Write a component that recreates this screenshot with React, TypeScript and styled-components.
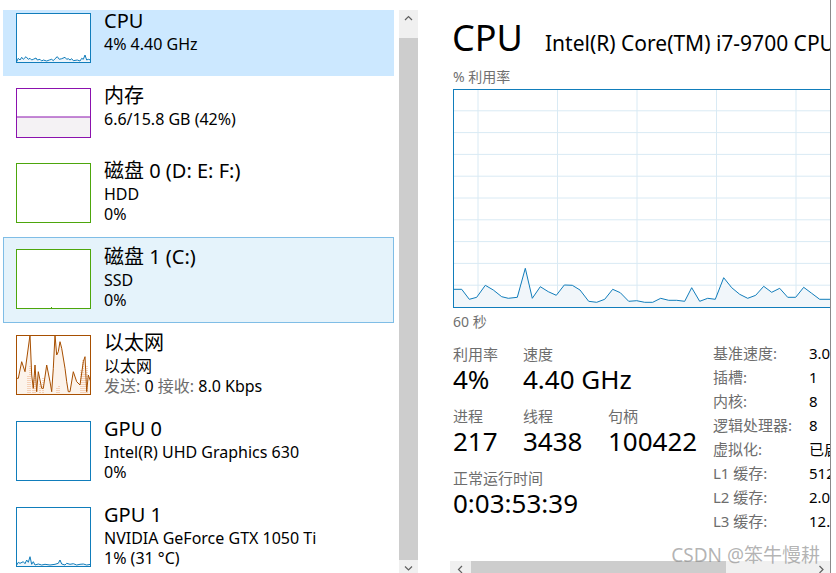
import React from 'react';
import styled, { createGlobalStyle } from 'styled-components';

const FONT = `"Noto Sans", "Noto Sans CJK SC", sans-serif`;

const GlobalStyle = createGlobalStyle`
  html, body { margin: 0; padding: 0; background: #fff; }
  body { font-family: ${FONT}; overflow: hidden; color: #000; }
  * { box-sizing: border-box; }
`;

const Window = styled.div`
  display: flex;
  width: 836px;
  height: 573px;
  overflow: hidden;
  background: #fff;
`;

/* ---------- Sidebar ---------- */
const Sidebar = styled.div`
  flex: none;
  width: 420px;
  height: 573px;
  display: flex;
  overflow: hidden;
`;

const List = styled.div`
  flex: none;
  width: 394px;
  height: 573px;
  padding: 10px 0 0 3px;
  display: flex;
  flex-direction: column;
  overflow: hidden;
`;

type RowState = 'selected' | 'hover' | undefined;

const Row = styled.div<{ $h: number; $pt: number; $state?: RowState }>`
  flex: none;
  display: flex;
  align-items: flex-start;
  height: ${(p) => p.$h}px;
  padding: ${(p) => p.$pt}px 0 0 13px;
  background: ${(p) =>
    p.$state === 'selected' ? '#cce8ff' : p.$state === 'hover' ? '#e5f3fb' : 'transparent'};
  outline: ${(p) => (p.$state === 'hover' ? '1px solid #7fbde6' : 'none')};
  outline-offset: -1px;
`;

const Thumb = styled.div<{ $color: string; $h: number }>`
  flex: none;
  width: 75px;
  height: ${(p) => p.$h}px;
  border: 1px solid ${(p) => p.$color};
  background: #fff;
  overflow: hidden;
  svg { display: block; width: 100%; height: 100%; }
`;

const TextCol = styled.div`
  margin: -5px 0 0 13px;
  display: flex;
  flex-direction: column;
  white-space: nowrap;
`;

const Title = styled.div`
  font-size: 20px;
  line-height: 26px;
`;

const Subs = styled.div`
  margin-top: 0;
`;

const Sub = styled.div`
  font-size: 16px;
  line-height: 20px;
`;

const Dim = styled.span`
  color: #6d6d6d;
`;

const VScroll = styled.div`
  flex: none;
  margin: 10px 0 0 5px;
  width: 19px;
  height: 567px;
  background: #f0f0f0;
  display: flex;
  flex-direction: column;
`;

const ArrowBtn = styled.div<{ $w?: number; $h?: number }>`
  flex: none;
  width: ${(p) => (p.$w ? `${p.$w}px` : 'auto')};
  height: ${(p) => (p.$h ? `${p.$h}px` : 'auto')};
  display: flex;
  align-items: center;
  justify-content: center;
  color: #606060;
`;

const TrackGap = styled.div<{ $size: number }>`
  flex: none;
  height: ${(p) => p.$size}px;
`;

const VThumb = styled.div`
  flex: 1;
  background: #cdcdcd;
`;

/* ---------- Main ---------- */
const Main = styled.div`
  position: relative;
  flex: none;
  width: 411px;
  height: 573px;
  border-right: 1px solid #8a8a8a;
  overflow: hidden;
  display: flex;
  flex-direction: column;
`;

const Content = styled.div`
  flex: none;
  padding: 20px 0 0 33px;
  display: flex;
  flex-direction: column;
  white-space: nowrap;
`;

const Header = styled.div`
  display: flex;
  align-items: baseline;
  height: 36px;
`;

const BigTitle = styled.div`
  flex: none;
  width: 92px;
  font-size: 36px;
  line-height: 36px;
  margin-left: -1px;
`;

const Model = styled.div`
  font-size: 21px;
  line-height: 26px;
  margin-left: 1px;
`;

const Caption = styled.div<{ $mt: number }>`
  margin-top: ${(p) => p.$mt}px;
  font-size: 14px;
  line-height: 16px;
  color: #707070;
`;

const Chart = styled.div`
  flex: none;
  margin-top: 4px;
  width: 400px;
  height: 219px;
  border: 1px solid #117dbb;
  background: #fff;
  svg { display: block; }
`;

const Stats = styled.div`
  margin-top: 11px;
  display: flex;
  align-items: flex-start;
`;

const LeftStats = styled.div`
  flex: none;
  width: 260px;
  padding-top: 3px;
  display: grid;
  grid-template-columns: 70px 85px auto;
  row-gap: 12px;
`;

const StatCell = styled.div<{ $span?: boolean }>`
  display: flex;
  flex-direction: column;
  grid-column: ${(p) => (p.$span ? '1 / -1' : 'auto')};
`;

const StatLabel = styled.div`
  font-size: 15px;
  line-height: 20px;
  color: #6d6d6d;
`;

const StatValue = styled.div`
  font-size: 26px;
  line-height: 30px;
`;

const RightStats = styled.div`
  flex: none;
  display: grid;
  grid-template-columns: 96px auto;
  font-size: 15px;
  line-height: 24px;
`;

const InfoLabel = styled.div`
  color: #6d6d6d;
`;

const InfoValue = styled.div`
  color: #000;
`;

const Spacer = styled.div`
  flex: 1;
`;

const HScroll = styled.div`
  flex: none;
  height: 17px;
  margin: 0 0 -5px 30px;
  background: #f0f0f0;
  display: flex;
`;

const HThumb = styled.div`
  flex: none;
  width: 255px;
  background: #cdcdcd;
`;

const HTrack = styled.div`
  flex: 1;
`;

const Watermark = styled.div`
  position: absolute;
  right: 10px;
  bottom: 7px;
  font-size: 19px;
  line-height: 22px;
  color: rgba(130, 130, 130, 0.6);
  white-space: nowrap;
`;

/* ---------- Icons ---------- */
const Chevron = ({ dir }: { dir: 'up' | 'down' | 'left' | 'right' }) => {
  const pts: Record<string, string> = {
    up: '1,5 4.5,1.5 8,5',
    down: '1,1.5 4.5,5 8,1.5',
    left: '5,1 1.5,4.5 5,8',
    right: '1.5,1 5,4.5 1.5,8',
  };
  const vert = dir === 'up' || dir === 'down';
  return (
    <svg width={vert ? 9 : 7} height={vert ? 7 : 9} viewBox={vert ? '0 0 9 7' : '0 0 7 9'}>
      <polyline points={pts[dir]} fill="none" stroke="currentColor" strokeWidth="1.2" />
    </svg>
  );
};

type P = [number, number];
const toStr = (p: P[]) => p.map(([x, y]) => `${x.toFixed(1)},${y.toFixed(1)}`).join(' ');
const area = (p: P[], bottom: number) =>
  `M${p[0][0].toFixed(1)},${bottom} L${toStr(p).replace(/ /g, ' L')} L${p[p.length - 1][0].toFixed(1)},${bottom} Z`;

const cpuThumbPts: P[] = (
  [
    [50, 185], [55, 175], [60, 180], [65, 172], [70, 178], [78, 170], [85, 178], [90, 175],
    [95, 180], [100, 178], [108, 174], [112, 180], [120, 178], [125, 183], [130, 180], [140, 183],
    [148, 180], [155, 178], [160, 182], [165, 176], [172, 170], [178, 178], [185, 176], [195, 172],
    [200, 178], [205, 176], [210, 180], [215, 176], [220, 182], [232, 180], [240, 183], [245, 175],
    [250, 178], [255, 165], [260, 180], [265, 178], [272, 180],
  ] as P[]
).map(([x, y]) => [x / 3 - 17, y / 3 - 14] as P);

const gpuThumbPts: P[] = (
  [
    [50, 360], [55, 352], [60, 355], [70, 350], [75, 356], [80, 345], [85, 352], [90, 335],
    [95, 358], [100, 350], [105, 360], [115, 357], [125, 360], [135, 358], [150, 360], [165, 358],
    [175, 355], [180, 345], [185, 357], [195, 360], [200, 355], [210, 358], [220, 356], [230, 360],
    [240, 358], [250, 357], [260, 360], [272, 358],
  ] as P[]
).map(([x, y]) => [x / 3 - 17, y / 3 - 63] as P);

const ethPts: P[] = (
  [
    [50, 160], [55, 160], [65, 110], [75, 140], [90, 30], [95, 150], [100, 190], [105, 120],
    [110, 200], [115, 140], [125, 190], [130, 190], [140, 120], [150, 170], [155, 200], [160, 130],
    [165, 30], [170, 90], [175, 80], [180, 50], [185, 70], [195, 130], [200, 170], [205, 200],
    [210, 200], [220, 140], [230, 170], [240, 180], [250, 110], [255, 95], [260, 200], [265, 150],
    [272, 170],
  ] as P[]
).map(([x, y]) => [x / 3 - 17, y / 3 - 11] as P);

const ethRecv: [number, number][] = [
  [11, 40], [13, 30], [16, 44], [18, 36], [23, 48], [26, 42], [40, 52], [42, 50],
  [64, 34], [66, 24], [68, 38], [70, 30],
];

const CpuThumbArt = () => (
  <svg viewBox="0 0 73 48" preserveAspectRatio="none">
    <path d={area(cpuThumbPts, 48)} fill="#eef5fb" />
    <polyline points={toStr(cpuThumbPts)} fill="none" stroke="#117dbb" strokeWidth="1" />
  </svg>
);

const MemThumbArt = () => (
  <svg viewBox="0 0 73 48" preserveAspectRatio="none">
    <rect x="0" y="28" width="73" height="20" fill="#f4f2f4" />
    <line x1="0" y1="28" x2="73" y2="28" stroke="#8b12ae" strokeWidth="1" />
  </svg>
);

const DiskDotArt = () => (
  <svg viewBox="0 0 73 58" preserveAspectRatio="none">
    <rect x="34" y="57" width="1" height="1" fill="#4da60c" />
  </svg>
);

const EthThumbArt = () => (
  <svg viewBox="0 0 73 58" preserveAspectRatio="none">
    <path d={area(ethPts, 58)} fill="#fcf3eb" />
    {ethRecv.map(([x, top]) => (
      <line key={x} x1={x} y1={top} x2={x} y2={58} stroke="#e89a68" strokeWidth="0.8" strokeDasharray="1 1" />
    ))}
    <polyline points={toStr(ethPts)} fill="none" stroke="#a74f01" strokeWidth="1" />
  </svg>
);

const GpuThumbArt = () => (
  <svg viewBox="0 0 73 58" preserveAspectRatio="none">
    <path d={area(gpuThumbPts, 58)} fill="#eef5fb" />
    <polyline points={toStr(gpuThumbPts)} fill="none" stroke="#117dbb" strokeWidth="1" />
  </svg>
);

/* main chart */
const chartAbs: P[] = [
  [453, 289.3], [461.7, 289.3], [469.3, 299.3], [476.7, 297.3], [485.3, 285.3], [493.3, 290],
  [501.7, 296.7], [508.3, 298.3], [517.3, 297.3], [525.3, 268.3], [532.3, 298.3], [540.3, 286.7],
  [548.3, 291.7], [556.3, 295.3], [564.3, 285], [572.3, 285.3], [580, 290], [588.7, 301.3],
  [596.7, 302.3], [604.7, 299.3], [612.7, 289.3], [620.3, 292.7], [628.7, 301.3], [636.7, 300.7],
  [644.7, 302.3], [652.7, 302.3], [660.7, 298.3], [668.7, 300.3], [676.7, 300.3], [684.7, 301.3],
  [691.7, 287.7], [699.7, 301.3], [707.7, 298.3], [715.3, 299.3], [723.7, 277.7], [731.7, 287.7],
  [739.7, 294.3], [747.7, 298.3], [755.7, 295.3], [763.7, 286.3], [771.7, 292.3], [779.7, 288.3],
  [787.7, 297.3], [795.7, 297.3], [803.7, 287.3], [811.7, 293.3], [819.7, 299.3], [830, 299.3],
  [838, 299.3], [846, 295], [854, 298],
];
const chartPts: P[] = chartAbs.map(([x, y]) => [x - 454, y - 90] as P);
const hLines = [1, 2, 3, 4, 5, 6, 7, 8, 9].map((k) => 21.8 * k - 1);
const vLines = [24, 103.5, 183, 262.5, 342, 421];

const CpuChart = () => (
  <svg width={398} height={217} viewBox="0 0 398 217">
    {hLines.map((y) => (
      <line key={`h${y}`} x1={0} y1={y} x2={398} y2={y} stroke="#d9eaf4" strokeWidth="1" />
    ))}
    {vLines.map((x) => (
      <line key={`v${x}`} x1={x} y1={0} x2={x} y2={217} stroke="#d9eaf4" strokeWidth="1" />
    ))}
    <path d={area(chartPts, 217)} fill="#f1f6fa" />
    <polyline points={toStr(chartPts)} fill="none" stroke="#117dbb" strokeWidth="1" />
  </svg>
);

/* ---------- Data ---------- */
type Item = {
  title: string;
  lines: React.ReactNode[];
  color: string;
  art?: React.ReactNode;
  state?: RowState;
  h: number;
  pt: number;
  thumbH: number;
};

const items: Item[] = [
  { title: 'CPU', lines: ['4% 4.40 GHz'], color: '#117dbb', art: <CpuThumbArt />, state: 'selected', h: 66, pt: 3, thumbH: 50 },
  { title: '内存', lines: ['6.6/15.8 GB (42%)'], color: '#8b12ae', art: <MemThumbArt />, h: 75, pt: 12, thumbH: 50 },
  { title: '磁盘 0 (D: E: F:)', lines: ['HDD', '0%'], color: '#4da60c', h: 86, pt: 12, thumbH: 60 },
  { title: '磁盘 1 (C:)', lines: ['SSD', '0%'], color: '#4da60c', art: <DiskDotArt />, state: 'hover', h: 86, pt: 12, thumbH: 60 },
  {
    title: '以太网',
    lines: [
      '以太网',
      <>
        <Dim>发送:</Dim> 0 <Dim>接收:</Dim> 8.0 Kbps
      </>,
    ],
    color: '#a74f01',
    art: <EthThumbArt />,
    h: 86,
    pt: 12,
    thumbH: 60,
  },
  { title: 'GPU 0', lines: ['Intel(R) UHD Graphics 630', '0%'], color: '#117dbb', h: 86, pt: 12, thumbH: 60 },
  { title: 'GPU 1', lines: ['NVIDIA GeForce GTX 1050 Ti', '1% (31 °C)'], color: '#117dbb', art: <GpuThumbArt />, h: 86, pt: 12, thumbH: 60 },
];

const info: [string, string][] = [
  ['基准速度:', '3.00 GHz'],
  ['插槽:', '1'],
  ['内核:', '8'],
  ['逻辑处理器:', '8'],
  ['虚拟化:', '已启用'],
  ['L1 缓存:', '512 KB'],
  ['L2 缓存:', '2.0 MB'],
  ['L3 缓存:', '12.0 MB'],
];

export default function App() {
  return (
    <>
      <GlobalStyle />
      <Window>
        <Sidebar>
          <List>
            {items.map((it) => (
              <Row key={it.title} $h={it.h} $pt={it.pt} $state={it.state}>
                <Thumb $color={it.color} $h={it.thumbH}>
                  {it.art}
                </Thumb>
                <TextCol>
                  <Title>{it.title}</Title>
                  <Subs>
                    {it.lines.map((l, i) => (
                      <Sub key={i}>{l}</Sub>
                    ))}
                  </Subs>
                </TextCol>
              </Row>
            ))}
          </List>
          <VScroll>
            <ArrowBtn $h={17}>
              <Chevron dir="up" />
            </ArrowBtn>
            <TrackGap $size={11} />
            <VThumb />
            <ArrowBtn $h={17}>
              <Chevron dir="down" />
            </ArrowBtn>
          </VScroll>
        </Sidebar>

        <Main>
          <Content>
            <Header>
              <BigTitle>CPU</BigTitle>
              <Model>Intel(R) Core(TM) i7-9700 CPU @ 3.00GHz</Model>
            </Header>
            <Caption $mt={13}>% 利用率</Caption>
            <Chart>
              <CpuChart />
            </Chart>
            <Caption $mt={6}>60 秒</Caption>
            <Stats>
              <LeftStats>
                <StatCell>
                  <StatLabel>利用率</StatLabel>
                  <StatValue>4%</StatValue>
                </StatCell>
                <StatCell>
                  <StatLabel>速度</StatLabel>
                  <StatValue>4.40 GHz</StatValue>
                </StatCell>
                <StatCell />
                <StatCell>
                  <StatLabel>进程</StatLabel>
                  <StatValue>217</StatValue>
                </StatCell>
                <StatCell>
                  <StatLabel>线程</StatLabel>
                  <StatValue>3438</StatValue>
                </StatCell>
                <StatCell>
                  <StatLabel>句柄</StatLabel>
                  <StatValue>100422</StatValue>
                </StatCell>
                <StatCell $span>
                  <StatLabel>正常运行时间</StatLabel>
                  <StatValue>0:03:53:39</StatValue>
                </StatCell>
              </LeftStats>
              <RightStats>
                {info.map(([k, v]) => (
                  <React.Fragment key={k}>
                    <InfoLabel>{k}</InfoLabel>
                    <InfoValue>{v}</InfoValue>
                  </React.Fragment>
                ))}
              </RightStats>
            </Stats>
          </Content>
          <Spacer />
          <HScroll>
            <ArrowBtn $w={21}>
              <Chevron dir="left" />
            </ArrowBtn>
            <HThumb />
            <HTrack />
            <ArrowBtn $w={18}>
              <Chevron dir="right" />
            </ArrowBtn>
          </HScroll>
          <Watermark>CSDN @笨牛慢耕</Watermark>
        </Main>
      </Window>
    </>
  );
}
